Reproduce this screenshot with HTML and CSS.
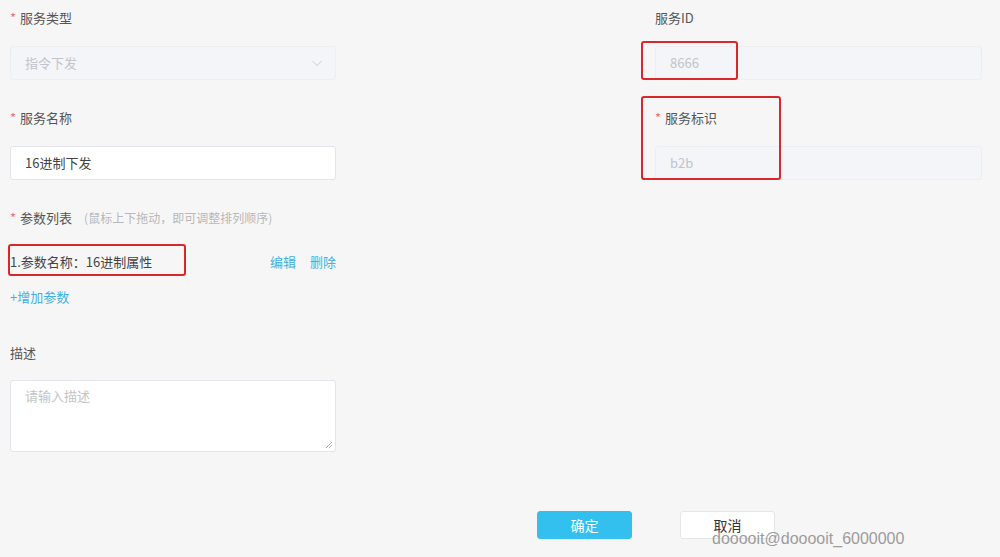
FILE: index.html
```html
<!DOCTYPE html>
<html lang="zh-CN">
<head>
  <meta charset="UTF-8">
  <title>服务编辑</title>
  <link rel="stylesheet" href="styles.css">
</head>
<body>
  <form class="service-form">
    <div class="columns">
      <div class="col col-left">
        <div class="form-item">
          <label class="label"><span class="req">*</span>服务类型</label>
          <div class="input disabled select">
            <span>指令下发</span>
            <svg class="arrow" width="12" height="12" viewBox="0 0 12 12"><path d="M1.5 4l4.5 4.5L10.5 4" fill="none" stroke="#c8cbd2" stroke-width="1"/></svg>
          </div>
        </div>
        <div class="form-item">
          <label class="label"><span class="req">*</span>服务名称</label>
          <div class="input">16进制下发</div>
        </div>
        <div class="form-item params">
          <label class="label"><span class="req">*</span>参数列表<span class="hint">(鼠标上下拖动，即可调整排列顺序)</span></label>
          <div class="param-row">
            <span class="param-name">1.参数名称：16进制属性</span>
            <span class="actions"><a>编辑</a><a>删除</a></span>
            <span class="mark mark-param"></span>
          </div>
          <a class="add-param">+增加参数</a>
        </div>
        <div class="form-item desc">
          <label class="label">描述</label>
          <div class="textarea">请输入描述
            <svg class="grip" width="8" height="8" viewBox="0 0 8 8"><path d="M1 7L7 1M4 7L7 4" stroke="#999" stroke-width="0.8"/></svg>
          </div>
        </div>
      </div>
      <div class="col col-right">
        <div class="form-item">
          <label class="label">服务ID</label>
          <div class="input disabled">8666</div>
          <span class="mark mark-id"></span>
        </div>
        <div class="form-item">
          <label class="label"><span class="req">*</span>服务标识</label>
          <div class="input disabled">b2b</div>
          <span class="mark mark-key"></span>
        </div>
      </div>
    </div>
    <div class="buttons">
      <button type="button" class="btn primary">确定</button>
      <button type="button" class="btn">取消</button>
    </div>
    <div class="watermark">dooooit@dooooit_6000000</div>
  </form>
</body>
</html>
```

FILE: styles.css
```css
body {
  margin: 0;
  background: #f7f6f7;
  font-family: "Noto Sans CJK SC", "Liberation Sans", sans-serif;
  font-size: 13px;
  color: #555;
}
.service-form {
  position: relative;
  height: 557px;
  overflow: hidden;
}
.columns {
  display: flex;
  padding-left: 10px;
}
.col {
  position: relative;
}
.col-left {
  width: 326px;
}
.col-right {
  width: 327px;
  margin-left: 319px;
}
.form-item {
  position: relative;
  padding-top: 8px;
  margin-bottom: 20px;
}
.label {
  display: block;
  height: 20px;
  line-height: 20px;
  margin-bottom: 18px;
  color: #555;
}
.req {
  color: #f07070;
  margin-right: 4px;
}
.hint {
  color: #b8b8b8;
  font-size: 12px;
  margin-left: 12px;
}
.input {
  box-sizing: border-box;
  height: 34px;
  line-height: 32px;
  padding: 0 14px;
  border: 1px solid #e3e5ea;
  border-radius: 3px;
  background: #fff;
  color: #444;
}
.input.disabled {
  background: #f4f5f8;
  border-color: #eceef2;
  color: #c2c4c9;
}
.select {
  display: flex;
  justify-content: space-between;
  align-items: center;
}
.arrow {
  margin-right: -2px;
}
.params .label {
  margin-bottom: 21px;
}
.param-row {
  position: relative;
  display: flex;
  justify-content: space-between;
  align-items: center;
  height: 24px;
}
.param-name {
  color: #444;
}
.actions a {
  color: #3fb2e0;
  margin-left: 14px;
}
.add-param {
  display: block;
  margin-top: 14px;
  line-height: 20px;
  color: #3fb2e0;
}
.desc {
  margin-top: 28px;
}
.desc .label {
  margin-bottom: 17px;
}
.textarea {
  position: relative;
  box-sizing: border-box;
  height: 72px;
  padding: 5px 14px;
  border: 1px solid #e3e5ea;
  border-radius: 3px;
  background: #fff;
  color: #c4c4c4;
}
.grip {
  position: absolute;
  right: 2px;
  bottom: 2px;
}
.mark {
  position: absolute;
  border: 2px solid #d8282b;
  border-radius: 3px;
}
.mark-param {
  left: -2px;
  top: -5px;
  width: 174px;
  height: 28px;
}
.mark-id {
  left: -14px;
  top: 41px;
  width: 93px;
  height: 35px;
}
.mark-key {
  left: -14px;
  top: -4px;
  width: 136px;
  height: 80px;
}
.buttons {
  display: flex;
  gap: 48px;
  margin: 39px 0 0 537px;
}
.btn {
  width: 95px;
  height: 28px;
  border: 1px solid #e6e6e6;
  border-radius: 3px;
  background: #fff;
  color: #333;
  font-family: inherit;
  font-size: 14px;
  padding: 0;
}
.btn.primary {
  background: #33c0ee;
  border-color: #33c0ee;
  color: #fff;
}
.watermark {
  position: absolute;
  left: 712px;
  top: 530px;
  font-family: "Liberation Sans", Arial, sans-serif;
  font-size: 16px;
  color: #9c9c9c;
}
```
